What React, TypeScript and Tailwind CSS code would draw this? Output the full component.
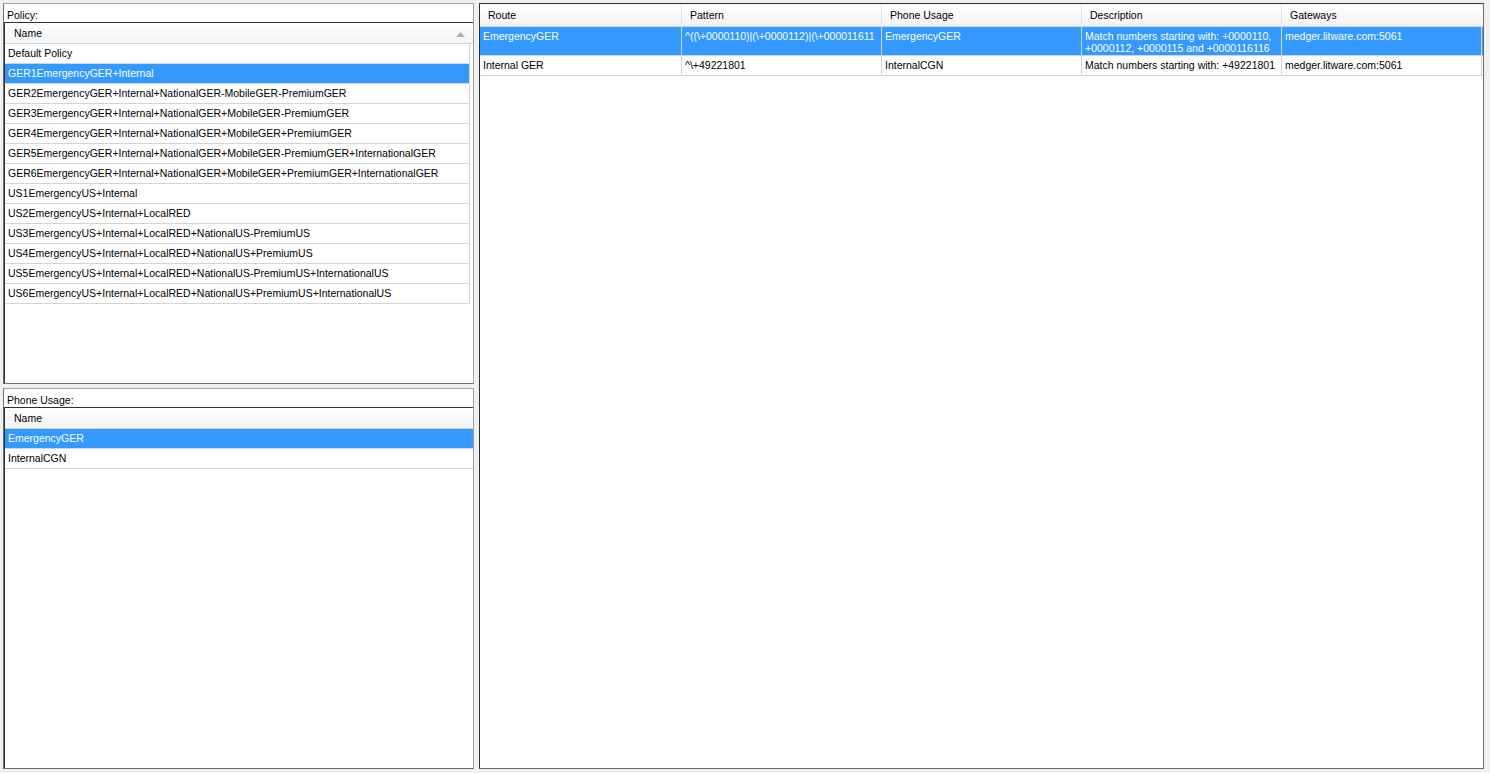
import React from "react";

const policies = [
  "Default Policy",
  "GER1EmergencyGER+Internal",
  "GER2EmergencyGER+Internal+NationalGER-MobileGER-PremiumGER",
  "GER3EmergencyGER+Internal+NationalGER+MobileGER-PremiumGER",
  "GER4EmergencyGER+Internal+NationalGER+MobileGER+PremiumGER",
  "GER5EmergencyGER+Internal+NationalGER+MobileGER-PremiumGER+InternationalGER",
  "GER6EmergencyGER+Internal+NationalGER+MobileGER+PremiumGER+InternationalGER",
  "US1EmergencyUS+Internal",
  "US2EmergencyUS+Internal+LocalRED",
  "US3EmergencyUS+Internal+LocalRED+NationalUS-PremiumUS",
  "US4EmergencyUS+Internal+LocalRED+NationalUS+PremiumUS",
  "US5EmergencyUS+Internal+LocalRED+NationalUS-PremiumUS+InternationalUS",
  "US6EmergencyUS+Internal+LocalRED+NationalUS+PremiumUS+InternationalUS",
];

const usages = ["EmergencyGER", "InternalCGN"];

function Header({ label, arrow }: { label: string; arrow?: boolean }) {
  return (
    <div className="h-[21px] shrink-0 flex items-center justify-between border-b border-[#d5d5d5] bg-gradient-to-b from-white to-[#f3f4f6] pl-[9px] pr-[8px] pt-[1px]">
      <span>{label}</span>
      {arrow && (
        <svg width="9" height="5" viewBox="0 0 9 5" className="mt-[1px]">
          <polygon points="0,5 4.5,0 9,5" fill="#b0b0b0" />
        </svg>
      )}
    </div>
  );
}

function Panel({
  title,
  rows,
  selected,
  fixedCol,
  arrow,
}: {
  title: string;
  rows: string[];
  selected: number;
  fixedCol?: boolean;
  arrow?: boolean;
}) {
  return (
    <div className="h-[381px] shrink-0 flex flex-col bg-white border border-[#a0a0a0] border-b-[#6d6d6d] border-l-[#6d6d6d]">
      <div className="h-[18px] shrink-0 pl-[3px] pt-[5px] leading-[13px]">{title}</div>
      <div className="flex-1 flex flex-col border-t border-l border-[#2f2f2f]">
        <Header label="Name" arrow={arrow} />
        <div className="flex flex-col">
          {rows.map((r, i) => (
            <div
              key={r}
              className={
                "h-[20px] flex items-center border-b border-[#d4d4d4] " +
                (fixedCol ? "w-[465px] border-r" : "w-full")
              }
            >
              <div
                className={
                  "h-full w-full flex items-center pl-[3px] whitespace-nowrap " +
                  (i === selected ? "bg-[#3399ff] text-white" : "text-black")
                }
              >
                {r}
              </div>
            </div>
          ))}
        </div>
      </div>
    </div>
  );
}

const cols = ["Route", "Pattern", "Phone Usage", "Description", "Gateways"];

export default function App() {
  return (
    <div
      className="w-[1490px] h-[773px] bg-[#f0f0f0] flex gap-[5px] pl-[3px] pt-[3px] text-[10.5px] text-black overflow-hidden"
      style={{ fontFamily: '"Liberation Sans", Arial, sans-serif' }}
    >
      <div className="w-[471px] shrink-0 flex flex-col gap-[4px]">
        <Panel title="Policy:" rows={policies} selected={1} fixedCol arrow />
        <Panel title="Phone Usage:" rows={usages} selected={0} />
      </div>
      <div className="w-[1005px] h-[766px] shrink-0 flex flex-col bg-white border border-[#6b6b6b] border-t-[#2f2f2f] border-l-[#2f2f2f]">
        <div className="h-[23px] shrink-0 grid grid-cols-[202px_200px_200px_200px_200px] border-b border-[#d5d5d5] bg-gradient-to-b from-white to-[#f3f4f6]">
          {cols.map((c, i) => (
            <div
              key={c}
              className={"flex items-center pl-[8px] pt-[1px] " + (i < 4 ? "border-r border-[#e3e3e3]" : "")}
            >
              {c}
            </div>
          ))}
        </div>
        <div className="h-[29px] shrink-0 grid grid-cols-[202px_200px_200px_200px_200px] border-b border-[#d4d4d4] bg-[#3399ff] text-white leading-[12px]">
          <div className="pl-[3px] pt-[3px] border-r border-[#d4d4d4]">EmergencyGER</div>
          <div className="pl-[3px] pt-[3px] border-r border-[#d4d4d4] whitespace-nowrap overflow-hidden">
            {"^((\\+0000110)|(\\+0000112)|(\\+000011611"}
          </div>
          <div className="pl-[3px] pt-[3px] border-r border-[#d4d4d4]">EmergencyGER</div>
          <div className="pl-[3px] pt-[3px] border-r border-[#d4d4d4] whitespace-nowrap">
            <div>Match numbers starting with: +0000110,</div>
            <div>+0000112, +0000115 and +0000116116</div>
          </div>
          <div className="pl-[3px] pt-[3px] border-r border-[#d4d4d4]">medger.litware.com:5061</div>
        </div>
        <div className="h-[20px] shrink-0 grid grid-cols-[202px_200px_200px_200px_200px] border-b border-[#d4d4d4]">
          <div className="pl-[3px] flex items-center border-r border-[#d4d4d4]">Internal GER</div>
          <div className="pl-[3px] flex items-center border-r border-[#d4d4d4]">{"^\\+49221801"}</div>
          <div className="pl-[3px] flex items-center border-r border-[#d4d4d4]">InternalCGN</div>
          <div className="pl-[3px] flex items-center border-r border-[#d4d4d4] whitespace-nowrap">
            Match numbers starting with: +49221801
          </div>
          <div className="pl-[3px] flex items-center border-r border-[#d4d4d4]">medger.litware.com:5061</div>
        </div>
      </div>
    </div>
  );
}
